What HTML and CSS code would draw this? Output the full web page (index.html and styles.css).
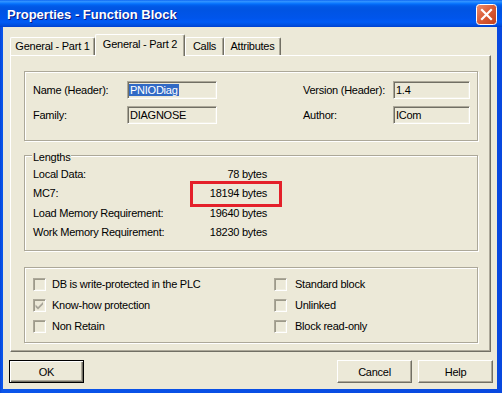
FILE: index.html
```html
<!DOCTYPE html>
<html lang="en">
<head>
    <meta charset="UTF-8">
    <meta name="viewport" content="width=device-width, initial-scale=1.0">
    <title>Properties - Function Block</title>
    <link rel="stylesheet" href="styles.css">
</head>
<body>
    <div class="window">
        <div class="titlebar">
            <span class="title">Properties - Function Block</span>
            <svg class="close" width="21" height="21" viewBox="0 0 21 21">
                <defs>
                    <linearGradient id="closeFill" x1="0" y1="0" x2="1" y2="1">
                        <stop offset="0" stop-color="#EC8F70"/>
                        <stop offset="0.5" stop-color="#DA5B35"/>
                        <stop offset="1" stop-color="#C2411C"/>
                    </linearGradient>
                </defs>
                <rect x="0.5" y="0.5" width="20" height="20" rx="3" fill="url(#closeFill)" stroke="#fff"/>
                <path d="M6 6 L15 15 M15 6 L6 15" stroke="#fff" stroke-width="2.2" stroke-linecap="square"/>
            </svg>
        </div>

        <div class="frame">
            <div class="client">
                <div class="tabs">
                    <div class="tab tab-part1">General - Part 1</div>
                    <div class="tab tab-part2 active">General - Part 2</div>
                    <div class="tab tab-calls">Calls</div>
                    <div class="tab tab-attr">Attributes</div>
                </div>

                <div class="panel">
                    <fieldset class="group">
                        <div class="info">
                            <span>Name (Header):</span>
                            <div class="field"><span class="sel">PNIODiag</span></div>
                            <span></span>
                            <span>Version (Header):</span>
                            <div class="field">1.4</div>

                            <span>Family:</span>
                            <div class="field">DIAGNOSE</div>
                            <span></span>
                            <span>Author:</span>
                            <div class="field">ICom</div>
                        </div>
                    </fieldset>

                    <fieldset class="group lengths">
                        <legend>Lengths</legend>
                        <div class="sizes">
                            <span>Local Data:</span>
                            <span class="value">78 bytes</span>
                            <span>MC7:</span>
                            <span class="value">18194 bytes<span class="mark"></span></span>
                            <span>Load Memory Requirement:</span>
                            <span class="value">19640 bytes</span>
                            <span>Work Memory Requirement:</span>
                            <span class="value">18230 bytes</span>
                        </div>
                    </fieldset>

                    <fieldset class="group flags">
                        <div class="checks">
                            <label class="check"><span class="box"></span>DB is write-protected in the PLC</label>
                            <label class="check wide"><span class="box"></span>Standard block</label>
                            <label class="check">
                                <span class="box">
                                    <svg width="11" height="11" viewBox="0 0 11 11">
                                        <path d="M1.5 4.5 L4 7 L9 2 L9 4.5 L4 9.5 L1.5 7 Z" fill="#A7A498"/>
                                    </svg>
                                </span>Know-how protection
                            </label>
                            <label class="check wide"><span class="box"></span>Unlinked</label>
                            <label class="check"><span class="box"></span>Non Retain</label>
                            <label class="check wide"><span class="box"></span>Block read-only</label>
                        </div>
                    </fieldset>
                </div>

                <div class="buttons">
                    <button class="btn default">OK</button>
                    <button class="btn">Cancel</button>
                    <button class="btn">Help</button>
                </div>
            </div>
        </div>
    </div>
</body>
</html>
```

FILE: styles.css
```css
* {
    box-sizing: border-box;
}

body {
    margin: 0;
    width: 502px;
    height: 393px;
    overflow: hidden;
    font-family: "Liberation Sans", Arial, sans-serif;
    font-size: 11px;
    letter-spacing: -0.25px;
    color: #000;
    background: #0848DF;
}

.window {
    height: 393px;
    display: flex;
    flex-direction: column;
}

/* title bar */
.titlebar {
    flex: none;
    height: 27px;
    display: flex;
    align-items: center;
    justify-content: space-between;
    padding: 1px 5px 0 7px;
    background: linear-gradient(to bottom,
        #0058EE 0, #3593FF 1px, #288EFF 2px, #127DFF 3px, #036FFC 4px,
        #0262EE 5px, #0057E5 7px, #0054E3 10px, #0055EB 18px,
        #005BF5 22px, #0050E0 25px, #0040CF 27px);
}

.title {
    color: #fff;
    font-size: 13px;
    font-weight: bold;
    letter-spacing: 0;
    text-shadow: 1px 1px #0A1883;
}

.close {
    display: block;
    margin-top: 1px;
}

/* window frame + client */
.frame {
    flex: 1;
    display: flex;
    padding: 0 5px 4px 3px;
    background: linear-gradient(to right, #0846D8, #0A55EA 2px, #0848DF);
}

.client {
    flex: 1;
    display: flex;
    flex-direction: column;
    background: #ECE9D8;
    padding: 7px 6px 6px 7px;
}

/* tabs */
.tabs {
    flex: none;
    height: 21px;
    display: flex;
    align-items: flex-end;
    position: relative;
    z-index: 1;
}

.tab {
    height: 18px;
    line-height: 17px;
    text-align: center;
    white-space: nowrap;
    background: #ECE9D8;
    border-top: 1px solid #fff;
    border-left: 1px solid #fff;
    border-right: 1px solid #716F64;
    box-shadow: inset -1px 0 #ACA899;
    border-radius: 2px 2px 0 0;
}

.tab.active {
    height: 22px;
    line-height: 19px;
    margin-bottom: -1px;
}

.tab-part1 { width: 85px; }
.tab-part2 { width: 90px; }
.tab-calls { width: 39px; }
.tab-attr { width: 57px; }

.panel {
    flex: 1;
    border-top: 1px solid #fff;
    border-left: 1px solid #fff;
    border-right: 1px solid #716F64;
    border-bottom: 1px solid #716F64;
    box-shadow: inset -1px -1px #ACA899;
    padding: 15px 12px 0 13px;
}

/* group boxes */
.group {
    margin: 0;
    padding: 0;
    min-width: 0;
    border: 1px solid #ACA899;
    box-shadow: inset 1px 1px #fff, 1px 1px #fff;
}

.group legend {
    padding: 4px 1px 0;
    margin-left: 7px;
    line-height: 13px;
    background: #ECE9D8;
}

.info {
    display: grid;
    grid-template-columns: 94px 90px 86px 90px 77px;
    row-gap: 7px;
    align-items: center;
    padding: 9px 7px 16px 8px;
}

.field {
    height: 18px;
    line-height: 16px;
    padding-left: 2px;
    white-space: nowrap;
    border: 1px solid;
    border-color: #ACA899 #fff #fff #ACA899;
    box-shadow: inset 1px 1px #716F64, inset -1px -1px #F1EFE2;
}

.sel {
    background: #316AC5;
    color: #fff;
    margin-left: -1px;
    padding: 0 1px;
}

.lengths {
    margin-top: 6px;
}

.sizes {
    display: grid;
    grid-template-columns: 150px 84px;
    grid-auto-rows: 19.4px;
    line-height: 19px;
    padding: 1px 0 7px 8px;
}

.value {
    text-align: right;
    position: relative;
}

.mark {
    position: absolute;
    left: 7px;
    top: -3px;
    width: 92px;
    height: 26px;
    border: 3px solid #E4202A;
}

.flags {
    margin-top: 16px;
}

.checks {
    display: grid;
    grid-template-columns: 241px 1fr;
    grid-auto-rows: 21px;
    padding: 6px 0 5px 8px;
}

.check {
    display: flex;
    align-items: center;
    gap: 6px;
    white-space: nowrap;
}

.check.wide {
    gap: 8px;
}

.box {
    flex: none;
    width: 13px;
    height: 13px;
    display: flex;
    align-items: center;
    justify-content: center;
    background: #ECE9D8;
    border: 1px solid;
    border-color: #ACA899 #fff #fff #ACA899;
    box-shadow: inset 1px 1px #9D9A8A, inset -1px -1px #F1EFE2;
}

.box svg {
    display: block;
}

/* dialog buttons */
.buttons {
    flex: none;
    height: 23px;
    display: flex;
    gap: 6px;
    margin: 8px -2px 0 -1px;
}

.btn {
    width: 75px;
    height: 23px;
    padding: 0;
    font: inherit;
    letter-spacing: inherit;
    color: #000;
    background: #ECE9D8;
    border: 1px solid;
    border-color: #fff #716F64 #716F64 #fff;
    box-shadow: inset -1px -1px #ACA899;
}

.btn.default {
    margin-right: auto;
    border-color: #000;
    box-shadow: inset 1px 1px #fff, inset -1px -1px #716F64, inset -2px -2px #ACA899;
}
```
